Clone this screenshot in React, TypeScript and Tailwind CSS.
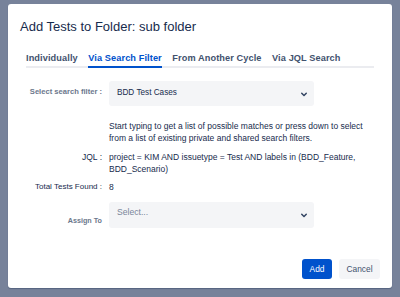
import React from 'react';

const Chevron = () => (
  <svg width="18" height="18" viewBox="0 0 24 24" className="text-[#344563]">
    <path
      fill="currentColor"
      d="M8.292 10.293a1.009 1.009 0 000 1.419l2.939 2.965c.218.215.5.322.779.322s.556-.107.769-.322l2.93-2.955a1.01 1.01 0 000-1.419.987.987 0 00-1.406 0l-2.298 2.317-2.307-2.327a.99.99 0 00-1.406 0z"
    />
  </svg>
);

const tabs = ['Individually', 'Via Search Filter', 'From Another Cycle', 'Via JQL Search'];

const App = () => {
  return (
    <div className="w-[400px] h-[297px] bg-[#77829a] pt-[4px] pl-[8px] font-['Liberation_Sans',Arial,sans-serif]">
      <div className="w-[384px] h-[284px] bg-white rounded-[3px] shadow-[0_1px_1px_rgba(9,30,66,0.3)] flex flex-col">
        {/* Header */}
        <h2 className="pl-[12px] pt-[15px] text-[13px] leading-[16px] text-[#172b4d]">
          Add Tests to Folder: sub folder
        </h2>

        {/* Tabs */}
        <div className="mx-[18px] mt-[17px] flex gap-[10.5px] border-b-2 border-[#ebecf0]">
          {tabs.map((t, i) => (
            <div
              key={t}
              className={
                i === 1
                  ? 'pb-[2px] -mb-[2px] border-b-2 border-[#0052cc] text-[#0052cc] font-bold text-[9.2px] leading-[12px] tracking-[0.1px]'
                  : 'pb-[2px] -mb-[2px] border-b-2 border-transparent text-[#42526e] font-bold text-[9.2px] leading-[12px] tracking-[0.1px]'
              }
            >
              {t}
            </div>
          ))}
        </div>

        {/* Form */}
        <div className="ml-[18px] mt-[13px] grid grid-cols-[76px_205px] gap-x-[7px]">
          <div className="flex items-center justify-end pb-[4px] text-[7.6px] font-bold text-[#6b778c]">
            Select search filter :
          </div>
          <div className="h-[25px] bg-[#f4f5f7] rounded-[3px] flex items-center justify-between pl-[8px] pr-[1px]">
            <span className="text-[8.2px] text-[#172b4d]">BDD Test Cases</span>
            <Chevron />
          </div>

          <div />
          <p className="mt-[14px] w-[270px] text-[8.5px] leading-[12px] text-[#172b4d]">
            Start typing to get a list of possible matches or press down to select from a list of existing private and shared search filters.
          </p>

          <div className="mt-[7px] text-right text-[8.5px] leading-[12px] text-[#172b4d]">JQL :</div>
          <p className="mt-[7px] w-[270px] text-[8.5px] leading-[12px] text-[#172b4d]">
            project = KIM AND issuetype = Test AND labels in (BDD_Feature, BDD_Scenario)
          </p>

          <div className="mt-[6px] text-right text-[8px] leading-[12px] text-[#172b4d]">Total Tests Found :</div>
          <div className="mt-[6px] text-[8.5px] leading-[12px] text-[#172b4d]">8</div>

          <div className="mt-[9px] self-end mb-[1px] text-right text-[7.2px] leading-[12px] font-bold text-[#6b778c]">
            Assign To
          </div>
          <div className="mt-[9px] h-[26px] bg-[#f4f5f7] rounded-[3px] flex items-start justify-between pl-[8px] pr-[1px] pt-[4px]">
            <span className="text-[8.6px] leading-[12px] text-[#7a869a]">Select...</span>
            <Chevron />
          </div>
        </div>

        {/* Footer */}
        <div className="mt-auto mb-[9px] mr-[12px] flex justify-end gap-[7px]">
          <button className="w-[30px] h-[20px] rounded-[3px] bg-[#0052cc] text-white text-[8.4px] flex items-center justify-center">
            Add
          </button>
          <button className="w-[41px] h-[20px] rounded-[3px] bg-[#f4f5f7] text-[#42526e] text-[8.4px] flex items-center justify-center">
            Cancel
          </button>
        </div>
      </div>
    </div>
  );
};

export default App;
